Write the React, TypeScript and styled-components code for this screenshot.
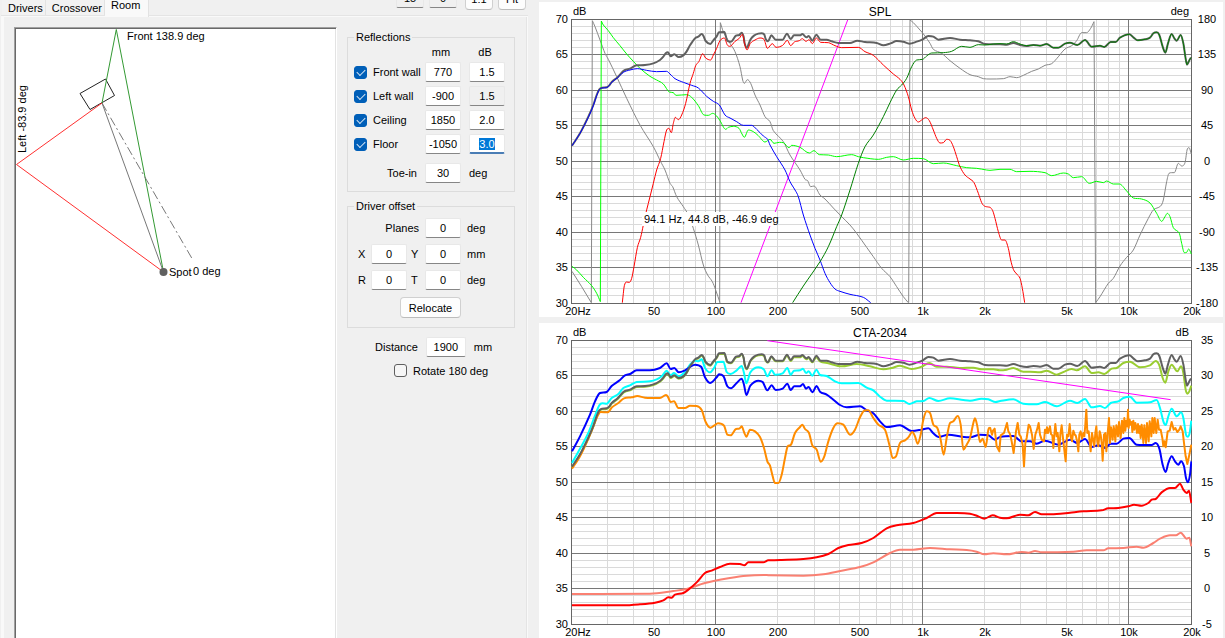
import React, { useEffect, useRef } from "react";
import styled, { createGlobalStyle, css } from "styled-components";

const GlobalStyle = createGlobalStyle`
  * { box-sizing: border-box; }
  body {
    margin: 0;
    background: #f0f0f0;
    color: #000;
    font: 11px/12px "Liberation Sans", Arial, sans-serif;
  }
`;

/* ---------- window ---------- */

const Window = styled.main`
  display: grid;
  grid-template-columns: 539px minmax(0, 1fr);
  height: 100vh;
  overflow: hidden;
`;

const Sidebar = styled.section`
  display: flex;
  flex-direction: column;
  min-height: 0;
`;

const TopBar = styled.header`
  display: flex;
  justify-content: space-between;
  height: 15px;
  padding: 0 13px 0 2px;
`;

const TabList = styled.nav`
  display: flex;
  align-items: flex-start;
`;

const Tab = styled.a<{ $active?: boolean }>`
  height: ${(p) => (p.$active ? 17 : 15)}px;
  padding: ${(p) => (p.$active ? "0 8px 5px 6px" : "2px 2px 1px 6px")};
  border-right: 1px solid #e2e2e2;
  background: ${(p) => (p.$active ? "#f9f9f9" : "#f2f2f2")};
  color: #000;
  text-decoration: none;
  line-height: ${(p) => (p.$active ? 11 : 12)}px;
  z-index: ${(p) => (p.$active ? 1 : 0)};
`;

const ZoomBar = styled.div`
  display: flex;
  gap: 5px;
  margin-top: -12px;
`;

const TabPage = styled.div`
  flex: 1;
  min-height: 0;
  margin: 0 11px 0 1px;
  padding: 1px 1px 0 3px;
  border-top: 1px solid #e4e4e4;
  background: #f9f9f9;
`;

const TabBody = styled.div`
  display: flex;
  gap: 10px;
  height: 100%;
  padding: 10px 11px 0 10px;
  border-right: 1px solid #e4e4e4;
  background: #f0f0f0;
`;

const RoomCanvas = styled.div`
  width: 323px;
  overflow: hidden;
  border: 1px solid #a0a0a0;
  border-right-color: #fff;
  border-bottom: 0;
  background: #fff;
  box-shadow: inset 1px 1px #696969, inset -1px 0 #e3e3e3;
`;

/* ---------- form parts ---------- */

const Controls = styled.form`
  flex: 1;
  display: flex;
  flex-direction: column;
  padding-top: 4px;
`;

const Group = styled.fieldset<{ $top?: number }>`
  margin: 0 0 8px;
  padding: ${(p) => p.$top ?? 0}px 6px 8px;
  border: 1px solid #dcdcdc;
  min-width: 0;
`;

const Legend = styled.legend`
  padding: 0 2px;
`;

const ReflectionRow = styled.div<{ $gap?: number }>`
  display: grid;
  grid-template-columns: 63px 36px 36px;
  column-gap: 8px;
  align-items: center;
  margin-top: ${(p) => p.$gap ?? 4}px;
`;

const OffsetRow = styled.div`
  display: grid;
  grid-template-columns: 17px 36px 18px 36px 1fr;
  align-items: center;
  margin-bottom: 6px;
`;

const Heading = styled.span`
  text-align: center;
  padding-right: 4px;
`;

const SideLabel = styled.label<{ $wide?: boolean }>`
  padding-left: 4px;
  white-space: nowrap;
  ${(p) =>
    p.$wide &&
    css`
      grid-column: span 3;
      padding-right: 6px;
      text-align: right;
    `}
`;

const RightLabel = styled.label`
  text-align: right;
`;

const Unit = styled.span<{ $inset?: number }>`
  padding-left: ${(p) => p.$inset ?? 0}px;
`;

const Field = styled.input<{ $w?: number; $dim?: boolean }>`
  width: ${(p) => p.$w ?? 36}px;
  height: 20px;
  padding: 0;
  border: 1px solid #e8e8e8;
  border-bottom-color: #868686;
  border-radius: 2px;
  background: ${(p) => (p.$dim ? "#f0f0f0" : "#fff")};
  color: #000;
  font: inherit;
  text-align: center;
  outline: none;
  &:focus { border-bottom: 2px solid #4a7db5; }
  &::selection { background: #0078d7; color: #fff; }
`;

const PushButton = styled.button<{ $w: number }>`
  width: ${(p) => p.$w}px;
  height: 21px;
  padding: 0;
  border: 1px solid #d0d0d0;
  border-bottom-color: #bcbcbc;
  border-radius: 4px;
  background: #fdfdfd;
  color: #000;
  font: inherit;
`;

const ZoomButton = styled(PushButton)`
  height: 22px;
  &:first-of-type { margin-left: 3px; }
`;

const CheckLabel = styled.label`
  display: flex;
  align-items: center;
  gap: 6px;
  white-space: nowrap;
`;

const Tick = styled.input`
  appearance: none;
  flex: none;
  display: grid;
  place-items: center;
  width: 13px;
  height: 13px;
  margin: 0;
  border: 1px solid #5f5f5f;
  border-radius: 3px;
  background: #f6f6f6;
  &:checked { border-color: #005fb8; background: #005fb8; }
  &:checked::before {
    content: "";
    width: 7px;
    height: 4px;
    margin-top: -2px;
    border: solid #d6e6f5;
    border-width: 0 0 1px 1px;
    transform: rotate(-45deg);
  }
`;

const ButtonRow = styled.div`
  display: flex;
  padding: 1px 0 1px 46px;
`;

const DistanceRow = styled.div`
  display: flex;
  align-items: center;
  gap: 8px;
  padding: 1px 0 7px 28px;
`;

const RotateRow = styled.div`
  padding-left: 47px;
`;

/* ---------- charts ---------- */

const Charts = styled.section`
  display: flex;
  flex-direction: column;
  gap: 6px;
  padding: 2px 2px 0 0;
`;

const Card = styled.figure`
  margin: 0;
  background: #fff;
`;

const Plot = styled.svg`
  display: block;
  width: 100%;
  height: auto;
`;

type Part = [number, string];
type Trace = { color: string; width?: number; parts: Part[][]; sharp?: boolean; dy?: number };

/* x offsets of the three frequency bands that the trace points are stored in */
const LOW = 0;
const MID = 690;
const HIGH = 1350;

function points(parts: Part[]): number[][] {
  return parts.flatMap(([x0, s]) =>
    s.trim().split(/\s+/).map((p) => {
      const [x, y] = p.split(",").map(Number);
      return [x + x0, y];
    })
  );
}

function toPath(pts: number[][], sharp?: boolean): string {
  if (sharp || pts.length < 3) return "M" + pts.map((p) => p.join(" ")).join("L");
  let d = `M${pts[0].join(" ")}`;
  for (let i = 0; i < pts.length - 1; i++) {
    const a = pts[Math.max(i - 1, 0)];
    const b = pts[i];
    const c = pts[i + 1];
    const e = pts[Math.min(i + 2, pts.length - 1)];
    const h = (c[0] - b[0]) / 3;
    const slope = (p: number[], q: number[]) => (q[1] - p[1]) / Math.max(q[0] - p[0], 1);
    const limit = (l: number, r: number, m: number) =>
      l * r <= 0 ? 0 : Math.sign(m) * Math.min(Math.abs(m), 3 * Math.abs(l), 3 * Math.abs(r));
    const s0 = i === 0 ? slope(b, c) : limit(slope(a, b), slope(b, c), slope(a, c));
    const s1 = i === pts.length - 2 ? slope(b, c) : limit(slope(b, c), slope(c, e), slope(b, e));
    d += `C${b[0] + h} ${b[1] + h * s0} ${c[0] - h} ${c[1] - h * s1} ${c[0]} ${c[1]}`;
  }
  return d;
}

const totalLow =
  "96,437 120,400 145,350 160,315 170,285 178,268 186,263 200,262 208,256 216,245 233,232 250,213 258,209 270,206 290,196 315,195 340,190 360,180 370,170 378,159 384,157 392,169 403,163 416,171 430,166 440,154 450,136 465,115 475,110 485,102 490,107 497,123 511,132 520,121 530,109 537,97 553,96 562,122 573,125 588,107 598,105 605,98 611,110 614,130 620,143 631,119 642,107 655,101 665,100 673,104 677,117 684,124";
const totalHigh =
  "130,135 150,137 170,132 190,143 205,143 225,131 240,128 262,135 285,120 305,140 330,137 343,141 362,126 377,126 390,113 418,103 430,112 443,121 465,118 480,113 490,100 500,97 508,105 518,140 526,158 534,130 545,102 553,115 560,122 572,105 580,130 586,170 591,194 596,185 600,177 604,173";

const total: Part[] = [
  [LOW, totalLow],
  [MID, "4,106 17,119 38,119 51,101 62,117 72,106 90,106 97,102 109,112 116,108 127,122 139,104 152,119 170,119 185,124 205,129 240,129 262,122 285,126 320,129 340,136 362,130 380,123 400,125 418,131 440,125 458,118 475,108 490,110 505,119 540,114 570,119 600,121 625,124 645,132"],
  [HIGH, "10,133 30,133 50,134 70,129 90,135 110,138 " + totalHigh],
];

const splTraces: Trace[] = [
  {
    color: "#888888",
    parts: [
      [[LOW, "96,814 125,860 154,908"]],
      [[LOW, "154,908 157,62"]],
      [[LOW, "157,62 165,80 180,120 195,160 205,178 230,230 260,295 300,375 340,440 362,485 375,510 390,550 398,560 410,590 430,620 445,645 460,685 475,735 490,795 503,825 517,845 527,870 540,908"]],
      [[LOW, "539,908 541,68"]],
      [
        [LOW, "541,68 550,95 570,130 585,155 600,200 608,240 613,250 622,239 632,250 645,285 660,315 675,350"],
        [MID, "0,365 10,392 40,425 60,465 90,510 105,538 113,542 122,560 132,558 150,585 165,597 190,624 215,650 240,675 260,700 290,742 310,770 335,805 360,830 380,860 400,890 415,908"],
      ],
      [[MID, "416,908 420,60"]],
      [
        [MID, "420,60 430,68 450,90 465,108 480,130 490,148 515,160 540,182 570,205 600,224 625,230 640,236"],
        [HIGH, "0,237 40,236 60,230 80,233 100,226 125,214 145,207 165,196 185,191 200,176 225,147 245,137 260,122 275,98 290,98 302,85 312,65"],
      ],
      [[HIGH, "312,65 317,908"]],
      [[HIGH, "317,908 330,890 355,850 370,835 390,798 410,772 430,750 450,705 475,655 490,630 512,618 520,600 530,545 537,520 545,518 553,518 565,490 575,498 585,488 592,447 597,443 604,462"]],
    ],
  },
  {
    color: "#00ff00",
    parts: [
      [[LOW, "96,799 110,810 130,832 155,857 170,880 181,905"]],
      [[LOW, "181,905 184,63"]],
      [
        [LOW, "184,63 190,75 205,92 220,113 240,137 260,162 280,184 300,205 330,229 350,240 370,252 388,276 400,278 408,286 440,284 455,292 475,317 492,345 505,346 518,340 530,348 540,362 557,388 565,382 580,379 597,385 606,402 613,412 625,390 640,395 655,407 675,426 690,418"],
        [MID, "12,430 28,427 40,428 57,443 65,436 90,442 118,459 132,452 148,464 175,465 200,470 245,464 265,470 280,473 325,478 350,472 370,470 400,480 430,475 460,476 490,491 520,489 560,497 590,503 620,505 650,510"],
        [HIGH, "0,511 30,508 60,508 80,515 120,514 165,518 185,527 220,519 235,522 250,533 275,530 298,550 320,544 340,548 350,543 370,552 388,552 410,573 430,594 455,597 480,609 500,640 515,664 525,650 532,640 540,650 550,683 568,700 575,730 583,758 590,757 596,747 604,762"],
      ],
    ],
  },
  { color: "#ff00ff", parts: [[[LOW, "603,908 923,60"]]] },
  { color: "#606060", width: 2, parts: [total] },
  {
    color: "#0000ff",
    parts: [[
      [LOW, "96,437 120,400 145,352 160,317 170,287 178,269 186,264 200,263 216,246 233,233 250,217 270,210 292,206 320,211 350,215 380,214 390,222 405,236 430,247 455,256 475,264 500,289 520,304 538,315 555,345 570,354 590,365 610,376 635,376 650,388 670,408 683,418"],
      [MID, "0,435 20,470 45,510 60,545 75,570 85,590 100,645 120,705 135,745 150,780 165,820 180,848 195,867 210,874 240,883 280,892 302,908"],
    ]],
  },
  {
    color: "#ff0000",
    parts: [[
      [LOW, "247,908 250,880 253,857 259,846 268,847 275,835 282,800 292,743 302,712 310,675 315,650 325,610 340,550 350,510 362,475 372,425 380,390 387,385 394,398 400,370 406,352 415,359 425,345 437,310 450,250 460,220 467,197 477,184 488,161 497,174 512,180 520,165 530,145 540,122 553,114 562,135 570,139 585,124 598,115 607,103 614,133 621,150 631,130 645,120 660,114 672,118 682,145"],
      [MID, "7,131 18,142 38,136 52,121 62,137 73,126 88,122 97,116 108,124 117,119 127,131 139,114 152,127 175,128 195,137 215,143 265,142 285,155 310,166 340,195 370,222 390,238 402,255 415,290 425,330 435,355 445,366 455,360 467,353 478,362 490,390 500,415 510,429 520,428 530,418 540,421 550,440 560,470 570,500 585,525 600,537 612,548 625,580 635,608 643,618 655,621"],
      [HIGH, "0,622 8,632 15,655 25,695 35,720 45,720 55,745 62,780 70,808 80,822 90,835 97,865 104,908"],
    ]],
  },
  {
    color: "#007f00",
    parts: [[
      [MID, "68,908 100,858 150,785 175,740 200,680 215,645 240,570 265,490 285,440 310,405 340,350 360,308 380,270 395,255 410,235 425,200 440,180 458,178 470,168 485,159 520,158 545,154 575,139 600,142 625,134 645,135"],
      [HIGH, "10,132 30,131 50,132 70,125 90,132 110,137 " + totalHigh],
    ]],
  },
];

const ctaTraces: Trace[] = [
  { color: "#9acd32", width: 2, dy: 11, parts: [[[LOW, totalLow]]] },
  {
    color: "#9acd32",
    width: 2,
    parts: [[
      [LOW, "684,135"],
      [MID, "4,117 17,130 38,130 51,113 62,129 72,118 90,118 97,114 109,124 116,120 127,133 139,118 150,130 175,136 215,145 260,138 300,145 340,154 365,150 390,143 425,153 455,146 478,135 500,146 530,146 570,150 610,149 635,154"],
      [HIGH, "10,154 30,157 50,155 70,150 100,161 120,161 150,163 170,158 200,170 225,160 245,153 260,157 285,145 305,165 325,163 343,168 365,152 380,150 400,135 420,131 450,148 480,142 497,129 508,142 518,180 526,194 535,160 545,140 562,160 573,145 580,165 587,215 592,227 598,220 604,203"],
    ]],
  },
  {
    color: "#00ffff",
    width: 2,
    parts: [[
      [LOW, "96,435 120,392 145,345 165,293 178,262 187,256 200,257 215,240 235,228 250,210 270,202 290,192 330,190 350,184 367,173 380,158 392,172 402,165 416,175 435,162 450,140 465,128 475,130 485,124 495,150 510,163 522,150 532,132 550,131 560,162 572,168 590,157 605,144 612,165 619,196 631,163 655,148 672,155 682,175"],
      [MID, "5,157 15,170 38,166 52,150 62,170 72,158 90,157 99,152 108,165 116,160 127,173 139,155 150,171 170,174 195,190 215,196 265,195 290,209 310,217 330,236 350,248 400,249 418,258 440,250 460,249 478,240 505,249 540,241 580,246 600,248 635,242 655,244"],
      [HIGH, "17,252 30,249 70,244 100,257 140,259 165,252 200,265 240,248 262,255 285,243 305,268 330,264 345,270 362,255 385,250 400,240 420,236 440,254 480,253 500,246 510,270 520,310 527,321 535,295 545,272 560,295 573,283 580,300 588,350 593,356 599,345 604,308"],
    ]],
  },
  {
    color: "#0000ff",
    width: 2,
    parts: [[
      [LOW, "96,400 120,355 150,290 165,250 180,225 200,222 215,204 240,186 255,172 270,168 290,157 330,157 360,150 380,136 392,153 403,150 416,163 435,157 450,147 465,140 484,147 495,178 510,195 530,178 537,169 550,174 562,205 573,211 590,195 605,182 612,200 619,231 631,203 655,188 668,192 682,217"],
      [MID, "5,202 17,216 38,212 52,197 62,216 73,205 90,205 99,198 108,212 116,207 127,223 140,204 150,221 170,230 190,245 210,261 230,268 270,265 290,277 310,286 330,310 350,327 390,322 425,339 455,335 475,331 490,346 505,357 535,350 575,356 600,358 630,350 655,352"],
      [HIGH, "15,365 30,357 70,354 95,370 120,370 140,377 165,368 205,380 240,365 262,375 285,363 305,387 325,382 345,390 362,377 380,377 400,362 418,360 440,380 485,381 497,375 508,392 518,440 527,462 535,435 545,415 555,430 565,440 573,430 582,445 588,480 594,493 600,470 604,430"],
    ]],
  },
  {
    color: "#ff8c00",
    width: 2,
    parts: [[
      [LOW, "96,452 120,415 150,350 170,300 182,282 203,283 216,268 235,255 252,241 275,238 292,234 315,239 360,240 378,231 383,235 392,252 402,250 415,270 435,270 450,263 470,264 485,276 497,312 511,329 522,323 534,316 552,323 562,350 572,352 588,333 598,332 605,325 612,342 619,356 630,335 645,340 660,357 672,390 682,430"],
      [MID, "0,443 8,475 15,495 25,495 35,470 45,420 53,385 63,380 75,345 90,327 97,320 105,333 117,345 127,382 140,395 152,431 163,415 175,370 190,330 203,316 220,320 240,350 255,335 270,298 285,277 295,277 310,300 325,320 345,335 358,380 368,420 378,415 390,375 405,367 415,358 427,342 435,355 443,377 452,350 460,305 470,280 480,285 490,320 502,330 512,365 521,410 530,360 540,315 550,310 563,294 572,320 580,395 590,380 600,360 610,315 615,301 622,325 630,372 638,362 647,387 655,335 660,328"],
    ]],
  },
  {
    color: "#ff8c00",
    width: 2,
    sharp: true,
    parts: [[
      [HIGH, "0,328 6,350 9,338 14,332 20,385 28,400 32,352 42,345 51,315 55,340 60,348 65,370 71,405 78,340 83,315 88,350 92,355 98,380 102,445 106,375 110,360 116,320 120,325 126,350 131,393 136,350 141,335 146,315 150,350 155,365 162,370 165,335 168,345 171,328 174,345 180,325 183,348 187,352 190,390 193,350 196,318 200,355 203,345 208,400 211,350 215,322 220,370 227,430 231,350 235,355 239,318 243,360 246,370 250,338 254,350 257,352 261,368 265,400 268,350 272,340 276,362 280,345 283,355 286,320 289,275 292,345 296,340 299,370 302,400 306,345 309,362 313,385 316,345 319,325 322,370 325,385 329,340 332,350 335,375 338,428 342,350 346,345 349,400 353,345 357,300 360,375 363,328 366,345 368,365 371,325 374,345 376,370 379,322 382,335 384,355 387,312 390,340 392,360 396,308 400,345 403,300 406,338 409,308 412,325 414,275 416,330 419,305 422,320 425,312 427,342 430,308 433,335 436,315 439,328 441,345 444,318 447,345 449,325 452,360 455,320 458,345 460,375 463,322 466,350 468,375 471,315 474,345 476,370 479,310 482,330 484,355 487,300 491,345 494,300 497,330 499,345 503,305 507,335 512,335 517,360 520,385 523,370 527,388 533,340 539,338 545,312 551,335 556,330 562,342 568,335 572,325 578,340 582,375 587,415 592,438 598,410 604,380"],
    ]],
  },
  { color: "#606060", width: 2, dy: 9, parts: [total] },
  { color: "#ff00ff", parts: [[[LOW, "682,68 1892,245"]]] },
  {
    color: "#fa8072",
    width: 2,
    parts: [[
      [LOW, "96,828 330,827 400,819 440,813 495,795 570,780 620,773 680,771"],
      [MID, "0,772 100,773 160,769 215,758 270,747 310,733 360,705 390,695 430,695 480,690 540,694 590,696 620,701 643,709"],
      [HIGH, "10,706 50,709 95,702 115,704 135,699 155,703 250,701 290,697 340,697 355,691 400,690 440,686 460,689 490,675 510,662 540,652 558,652 572,644 590,662 598,659 604,685"],
    ]],
  },
  {
    color: "#ff0000",
    width: 2,
    parts: [[
      [LOW, "96,862 250,862 300,859 345,854 370,847 385,838 395,839 405,830 430,825 445,815 470,793 495,765 515,758 540,747 570,737 600,738 613,742 625,733 670,733 685,727"],
      [MID, "0,727 35,726 100,723 140,718 175,708 205,690 235,681 275,675 310,660 350,631 380,622 430,615 470,600 500,585 560,585 600,587 625,595 643,602"],
      [HIGH, "8,592 30,599 50,601 90,590 115,592 135,582 155,589 200,588 240,584 280,580 335,577 355,571 385,570 415,565 432,560 455,563 475,555 485,545 497,543 515,523 540,510 555,510 570,497 580,515 590,525 597,518 604,555"],
    ]],
  },
];

const LEFT = 32;
const TOP = 17;
const WIDTH = 620;
const HEIGHT = 284;
const freqX = (f: number) => LEFT + Math.floor((Math.log10(f / 20) / 3) * WIDTH) + 0.5;
const levelY = (n: number) => TOP + Math.floor((n / 40) * HEIGHT) + 0.5;

const minorFreqs = [10, 100, 1000, 10000]
  .flatMap((d) => [2, 3, 4, 5, 6, 7, 8, 9].map((k) => k * d))
  .filter((f) => f > 20 && f < 20000);
const freqLabels: [number, string][] = [
  [20, "20Hz"], [50, "50"], [100, "100"], [200, "200"], [500, "500"],
  [1000, "1k"], [2000, "2k"], [5000, "5k"], [10000, "10k"], [20000, "20k"],
];
const dbTicks = [70, 65, 60, 55, 50, 45, 40, 35, 30];

interface ChartProps {
  title: string;
  rightUnit: string;
  rightTicks: number[];
  traces: Trace[];
  originY: number;
  readout?: string;
}

function Chart({ title, rightUnit, rightTicks, traces, originY, readout }: ChartProps) {
  const minor =
    minorFreqs.map((f) => `M${freqX(f)} ${TOP}V${TOP + HEIGHT}`).join("") +
    Array.from({ length: 39 }, (_, i) => `M${LEFT} ${levelY(i + 1)}H${LEFT + WIDTH}`).join("");
  const major =
    [100, 1000, 10000].map((f) => `M${freqX(f)} ${TOP}V${TOP + HEIGHT}`).join("") +
    [5, 10, 15, 20, 25, 30, 35].map((n) => `M${LEFT} ${levelY(n)}H${LEFT + WIDTH}`).join("");
  const clip = `plot-${title}`;
  return (
    <Card>
      <Plot viewBox="0 0 684 315" role="img" aria-label={title}>
        <clipPath id={clip}>
          <rect x={LEFT} y={TOP} width={WIDTH + 1} height={HEIGHT + 1} />
        </clipPath>
        <g fill="none" shapeRendering="crispEdges">
          <path d={minor} stroke="#dadada" />
          <path d={major} stroke="#787878" />
          <rect x={LEFT + 0.5} y={TOP + 0.5} width={WIDTH} height={HEIGHT} stroke="#666" />
        </g>
        <g clipPath={`url(#${clip})`} fill="none" strokeLinejoin="round">
          {traces.map((t, i) => (
            <g key={i} transform={`translate(1 ${originY + (t.dy ?? 0) / 3}) scale(${1 / 3})`}>
              {t.parts.map((p, j) => (
                <path key={j} d={toPath(points(p), t.sharp)} stroke={t.color} strokeWidth={(t.width ?? 1) * 3} />
              ))}
            </g>
          ))}
        </g>
        {readout && (
          <g>
            <rect x="103" y="210" width="134" height="14" fill="#fff" />
            <text x="105" y="221" fontSize="11">{readout}</text>
          </g>
        )}
        <text x="341" y="14" fontSize="12" textAnchor="middle">{title}</text>
        <g fontSize="11">
          <text x="34" y="13">dB</text>
          <text x="650" y="13" textAnchor="end">{rightUnit}</text>
          {dbTicks.map((v, i) => (
            <text key={v} x="29" y={Math.floor(levelY(i * 5)) + 4} textAnchor="end">{v}</text>
          ))}
          {rightTicks.map((v, i) => (
            <text key={v} x="668" y={Math.floor(levelY(i * 5)) + 4} textAnchor="middle">{v}</text>
          ))}
          {freqLabels.map(([f, s]) => (
            <text key={f} x={Math.floor(freqX(f)) + (f === 20 ? 7 : 1)} y="313" textAnchor="middle">{s}</text>
          ))}
        </g>
      </Plot>
    </Card>
  );
}

/* ---------- room plan ---------- */

function RoomPlan() {
  return (
    <svg viewBox="15 28 321 612" width="321" height="612" role="img" aria-label="Room plan" fill="none">
      <path d="M80 93.5L105.5 79L114.5 95.5L90 109.5Z" stroke="#222" />
      <path d="M102 103L116.3 29.5L163.5 272" stroke="#339933" />
      <path d="M102 103L163.5 272" stroke="#777" />
      <path d="M102 103L192 258.5" stroke="#777" strokeDasharray="9 3 2 3" />
      <path d="M102 103L16.5 164.5L163.5 272" stroke="#ff3030" />
      <circle cx="163.5" cy="272" r="4" fill="#606060" />
      <g fontSize="11" fill="#000">
        <text x="127" y="40">Front 138.9 deg</text>
        <text x="169" y="276">Spot</text>
        <text x="193" y="275">0 deg</text>
        <text transform="translate(26 153) rotate(-90)">Left -83.9 deg</text>
      </g>
    </svg>
  );
}

/* ---------- reflections ---------- */

const walls = [
  { id: "front", label: "Front wall", mm: "770", db: "1.5" },
  { id: "left", label: "Left wall", mm: "-900", db: "1.5", dim: true },
  { id: "ceiling", label: "Ceiling", mm: "1850", db: "2.0" },
];

export default function App() {
  const floorDb = useRef<HTMLInputElement>(null);
  useEffect(() => {
    floorDb.current?.focus();
    floorDb.current?.select();
  }, []);

  return (
    <Window>
      <GlobalStyle />
      <Sidebar>
        <TopBar>
          <TabList>
            <Tab href="#drivers">Drivers</Tab>
            <Tab href="#crossover">Crossover</Tab>
            <Tab href="#room" $active>Room</Tab>
          </TabList>
          <ZoomBar>
            <Field $w={28} $dim defaultValue="15" aria-label="Zoom width" />
            <Field $w={28} $dim defaultValue="0" aria-label="Zoom offset" />
            <ZoomButton type="button" $w={28}>1:1</ZoomButton>
            <ZoomButton type="button" $w={28}>Fit</ZoomButton>
          </ZoomBar>
        </TopBar>
        <TabPage>
          <TabBody>
            <RoomCanvas>
              <RoomPlan />
            </RoomCanvas>
            <Controls>
              <Group>
                <Legend>Reflections</Legend>
                <ReflectionRow $gap={3}>
                  <span />
                  <Heading>mm</Heading>
                  <Heading>dB</Heading>
                </ReflectionRow>
                {walls.map((w) => (
                  <ReflectionRow key={w.id}>
                    <CheckLabel><Tick type="checkbox" defaultChecked />{w.label}</CheckLabel>
                    <Field defaultValue={w.mm} aria-label={`${w.label} mm`} />
                    <Field defaultValue={w.db} $dim={w.dim} aria-label={`${w.label} dB`} />
                  </ReflectionRow>
                ))}
                <ReflectionRow>
                  <CheckLabel><Tick type="checkbox" defaultChecked />Floor</CheckLabel>
                  <Field defaultValue="-1050" aria-label="Floor mm" />
                  <Field ref={floorDb} defaultValue="3.0" aria-label="Floor dB" />
                </ReflectionRow>
                <ReflectionRow $gap={9}>
                  <RightLabel htmlFor="toe">Toe-in</RightLabel>
                  <Field id="toe" defaultValue="30" />
                  <Unit>deg</Unit>
                </ReflectionRow>
              </Group>
              <Group $top={6}>
                <Legend>Driver offset</Legend>
                <OffsetRow>
                  <SideLabel htmlFor="planes" $wide>Planes</SideLabel>
                  <Field id="planes" defaultValue="0" />
                  <Unit $inset={6}>deg</Unit>
                </OffsetRow>
                <OffsetRow>
                  <SideLabel htmlFor="dx">X</SideLabel>
                  <Field id="dx" defaultValue="0" />
                  <SideLabel htmlFor="dy">Y</SideLabel>
                  <Field id="dy" defaultValue="0" />
                  <Unit $inset={6}>mm</Unit>
                </OffsetRow>
                <OffsetRow>
                  <SideLabel htmlFor="dr">R</SideLabel>
                  <Field id="dr" defaultValue="0" />
                  <SideLabel htmlFor="dt">T</SideLabel>
                  <Field id="dt" defaultValue="0" />
                  <Unit $inset={6}>deg</Unit>
                </OffsetRow>
                <ButtonRow>
                  <PushButton type="button" $w={61}>Relocate</PushButton>
                </ButtonRow>
              </Group>
              <DistanceRow>
                <label htmlFor="distance">Distance</label>
                <Field id="distance" $w={40} defaultValue="1900" />
                <Unit>mm</Unit>
              </DistanceRow>
              <RotateRow>
                <CheckLabel><Tick type="checkbox" />Rotate 180 deg</CheckLabel>
              </RotateRow>
            </Controls>
          </TabBody>
        </TabPage>
      </Sidebar>
      <Charts>
        <Chart
          title="SPL"
          rightUnit="deg"
          rightTicks={[180, 135, 90, 45, 0, -45, -90, -135, -180]}
          traces={splTraces}
          originY={-2}
          readout="94.1 Hz, 44.8 dB, -46.9 deg"
        />
        <Chart
          title="CTA-2034"
          rightUnit="dB"
          rightTicks={[35, 30, 25, 20, 15, 10, 5, 0, -5]}
          traces={ctaTraces}
          originY={-5}
        />
      </Charts>
    </Window>
  );
}
